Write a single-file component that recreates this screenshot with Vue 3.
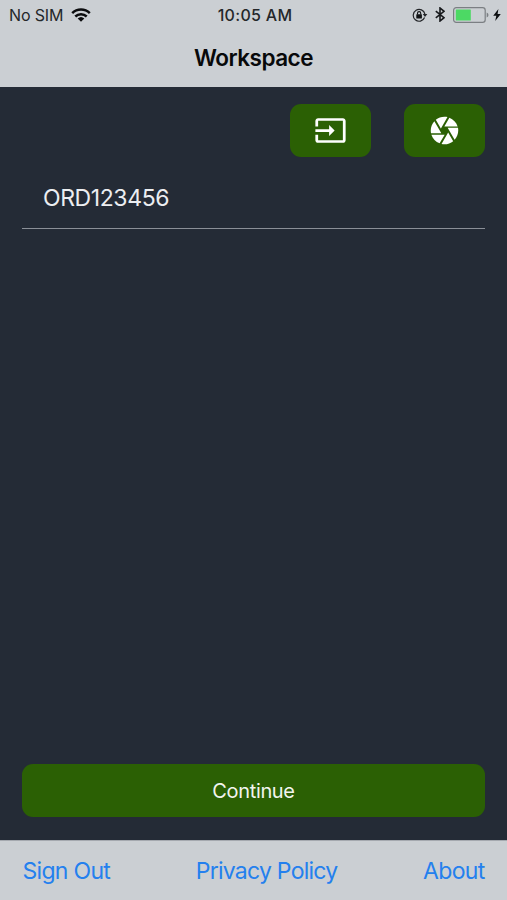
<script setup>
const links = [
  { label: 'Sign Out', cls: 'sign-out' },
  { label: 'Privacy Policy', cls: 'privacy' },
  { label: 'About', cls: 'about' },
]
</script>

<template>
  <div class="screen">
    <header class="header">
      <div class="status">
        <div class="carrier">
          <span class="sim">No SIM</span>
          <svg class="wifi" viewBox="0 0 20 14" width="20" height="14">
            <g fill="none" stroke="#0b0c0e" stroke-width="2.5">
              <path d="M1.2 5.2a12.6 12.6 0 0 1 17.6 0" />
              <path d="M4.3 8.5a8.1 8.1 0 0 1 11.4 0" />
            </g>
            <path d="M6.7 10.6a4.8 4.8 0 0 1 6.6 0L10 13.8z" fill="#0b0c0e" />
          </svg>
        </div>
        <span class="time">10:05 AM</span>
        <div class="indicators">
          <svg viewBox="0 0 16 14" width="16" height="14">
            <path d="M12.6 9.6A5.9 5.9 0 1 1 12.9 6" fill="none" stroke="#222427" stroke-width="1.2" />
            <path d="M10.8 6h4.5L13 9z" fill="#222427" />
            <rect x="4.3" y="6.2" width="5.6" height="4.2" rx=".5" fill="#111315" />
            <path d="M5.5 6.6V5.2a1.6 1.6 0 0 1 3.2 0v1.4" fill="none" stroke="#111315" stroke-width="1.1" />
          </svg>
          <svg class="bluetooth" viewBox="0 0 10 15" width="10" height="15">
            <path d="M.8 4.1 9 10.7 5 14V1l4 3.3L.8 10.9" fill="none" stroke="#17191c" stroke-width="1.6" />
          </svg>
          <svg class="battery" viewBox="0 0 36 16" width="36" height="16">
            <rect x=".6" y=".6" width="31.6" height="14.8" rx="2.6" fill="none" stroke="#7b7f83" stroke-width="1.2" />
            <rect x="2.8" y="2.6" width="15" height="10.8" rx=".5" fill="#4cd964" />
            <path d="M33.7 5.5q1.8.7 1.8 2.5t-1.8 2.5z" fill="#7b7f83" />
          </svg>
          <svg class="bolt" viewBox="0 0 8 12" width="8" height="12">
            <path d="M5.4 0 .2 6.8h3.1L2.2 12l5.6-7.1H4.6z" fill="#0d0f11" />
          </svg>
        </div>
      </div>
      <h1 class="title"><span>Workspace</span></h1>
    </header>

    <main class="content">
      <div class="tools">
        <button class="tool" type="button" aria-label="Enter">
          <svg viewBox="0 0 24 24" width="33" height="33" fill="#fff">
            <path d="M21 3.01H3c-1.1 0-2 .9-2 2V9h2V4.99h18v14.03H3V15H1v4.01c0 1.1.9 1.98 2 1.98h18c1.1 0 2-.88 2-1.98v-14c0-1.11-.9-2-2-2zM11 16l4-4-4-4v3H1v2h10v3z" />
          </svg>
        </button>
        <button class="tool" type="button" aria-label="Camera">
          <svg viewBox="0 0 24 24" width="33" height="33" fill="#fff">
            <path d="M9.4 10.5l4.77-8.26C13.47 2.09 12.75 2 12 2c-2.4 0-4.6.85-6.32 2.25l3.66 6.35.06-.1zM21.54 9c-.92-2.92-3.15-5.26-6-6.34L11.88 9h9.66zm.26 1h-7.49l.29.5 4.76 8.25C21 16.97 22 14.61 22 12c0-.69-.07-1.35-.2-2zM8.54 12l-3.9-6.75C3.01 7.03 2 9.39 2 12c0 .69.07 1.35.2 2h7.49l-1.15-2zm-6.08 3c.92 2.92 3.15 5.26 6 6.34L12.12 15H2.46zm11.27 0l-3.9 6.76c.7.15 1.42.24 2.17.24 2.4 0 4.6-.85 6.32-2.25l-3.66-6.35-.93 1.6z" />
          </svg>
        </button>
      </div>
      <div class="field"><span>ORD123456</span></div>
      <button class="continue" type="button"><span>Continue</span></button>
    </main>

    <footer class="footer">
      <a v-for="link in links" :key="link.label" :class="link.cls">{{ link.label }}</a>
    </footer>
  </div>
</template>

<style>
body {
  margin: 0;
}
</style>

<style scoped>
.screen {
  display: flex;
  flex-direction: column;
  width: 507px;
  height: 900px;
  overflow: hidden;
  background: #242b36;
  font-family: Inter, "Liberation Sans", sans-serif;
}
.header {
  box-sizing: border-box;
  height: 87px;
  background: #cbcfd3;
}
.status {
  display: grid;
  grid-template-columns: 1fr auto 1fr;
  align-items: center;
  height: 29px;
  padding: 0 6px 0 9px;
  color: #24272a;
}
.carrier {
  display: flex;
  align-items: center;
  gap: 8px;
}
.sim {
  font-size: 16px;
  letter-spacing: -0.15px;
  line-height: 20px;
}
.time {
  font-size: 16px;
  font-weight: 500;
  letter-spacing: 0.3px;
  line-height: 20px;
}
.indicators {
  display: flex;
  align-items: center;
  justify-content: flex-end;
}
.bluetooth {
  margin-left: 7px;
}
.battery {
  margin-left: 8px;
}
.bolt {
  margin-left: 4px;
}
.title {
  margin: 14px 0 0;
  text-align: center;
  font-size: 22.5px;
  font-weight: 600;
  line-height: 30px;
  letter-spacing: -0.5px;
  color: #08090a;
}
.content {
  display: flex;
  flex: 1;
  flex-direction: column;
  padding: 17px 22px 23px;
}
.tools {
  display: flex;
  justify-content: flex-end;
  gap: 33.5px;
}
button {
  display: flex;
  align-items: center;
  justify-content: center;
  padding: 0;
  border: 0;
  border-radius: 11px;
  background: #2b6004;
  color: #f2f5ef;
  font-family: inherit;
}
.tool {
  width: 81px;
  height: 53px;
}
.field {
  box-sizing: border-box;
  height: 72px;
  padding: 26px 21px 0;
  border-bottom: 1px solid #8a8f97;
  color: #eceef1;
  font-size: 23px;
  line-height: 30px;
  letter-spacing: -0.4px;
}
.continue {
  height: 53px;
  margin-top: auto;
  font-size: 20px;
  letter-spacing: -0.35px;
}
.footer {
  box-sizing: border-box;
  display: flex;
  justify-content: space-between;
  height: 60px;
  padding: 15px 22.5px 0;
  border-top: 1px solid #a5a9af;
  background: #cbcfd3;
  color: #2480ee;
  font-size: 23px;
  line-height: 30px;
  letter-spacing: -0.7px;
}
.privacy {
  letter-spacing: -0.75px;
}
</style>
